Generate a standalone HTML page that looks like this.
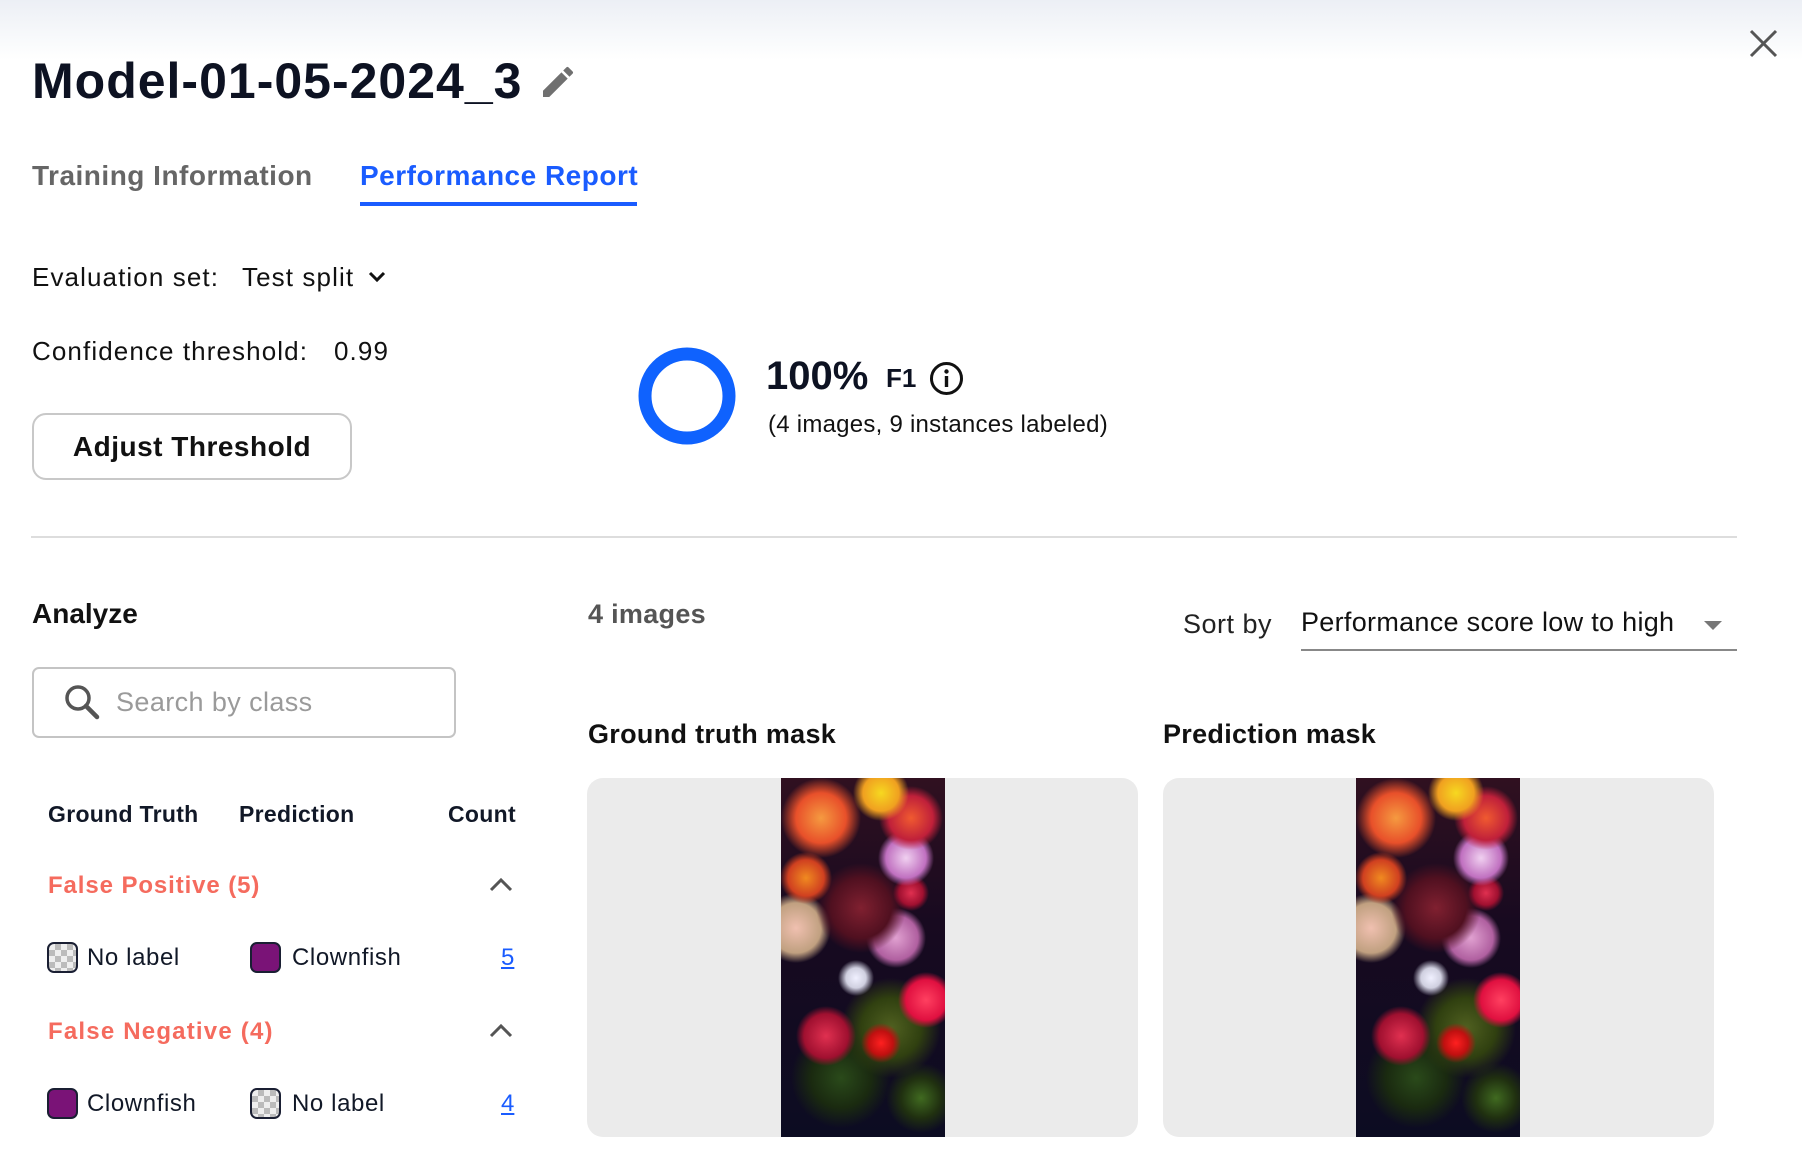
<!DOCTYPE html>
<html><head><meta charset="utf-8"><style>
*{margin:0;padding:0;box-sizing:border-box}
body{width:1802px;height:1157px;overflow:hidden;background:#fff;font-family:"Liberation Sans",sans-serif;color:#111827;position:relative}
.a{position:absolute;white-space:nowrap}
.top{position:absolute;left:0;top:0;width:1802px;height:60px;background:linear-gradient(#eceff5,#fff)}
.sw{position:absolute;width:31px;height:31px;border:2.5px solid #1a1f33;border-radius:7px}
.purple{background:#7a1377}
.chk{background-color:#eee;background-image:linear-gradient(45deg,#bbb 25%,transparent 25%,transparent 75%,#bbb 75%),linear-gradient(45deg,#bbb 25%,transparent 25%,transparent 75%,#bbb 75%);background-size:12px 12px;background-position:0 0,6px 6px}
.panel{position:absolute;top:778px;height:359px;width:551px;background:#ebebeb;border-radius:16px;overflow:hidden}
.strip{position:absolute;top:0;width:164px;height:359px;background:
radial-gradient(circle at 100px 15px,#f6d820 0,#f0a020 18px,transparent 28px),
radial-gradient(circle at 40px 40px,#f59a40 0,#e8502a 25px,transparent 40px),
radial-gradient(circle at 130px 40px,#f05a30 0,#c0203a 22px,transparent 32px),
radial-gradient(circle at 125px 80px,#f0d0f0 0,#c070c0 20px,transparent 28px),
radial-gradient(circle at 25px 100px,#f08a20 0,#d04020 18px,transparent 26px),
radial-gradient(circle at 130px 115px,#e03050 0,#a01030 12px,transparent 18px),
radial-gradient(circle at 80px 130px,#802030 0,#501020 30px,transparent 45px),
radial-gradient(circle at 15px 150px,#f0c0b0 0,#c0a080 25px,transparent 35px),
radial-gradient(circle at 115px 160px,#e0a0d0 0,#b060a0 22px,transparent 30px),
radial-gradient(circle at 75px 200px,#f0f0ff 0,#d0d0e0 10px,transparent 18px),
radial-gradient(circle at 145px 222px,#ff4060 0,#e01040 20px,transparent 28px),
radial-gradient(circle at 45px 258px,#e03050 0,#a01030 22px,transparent 30px),
radial-gradient(circle at 100px 265px,#ff2020 0,#c01010 12px,transparent 20px),
radial-gradient(circle at 110px 250px,#506020 0,#304010 30px,transparent 50px),
radial-gradient(circle at 60px 300px,#2a4a1a 0,#1a2a10 30px,transparent 50px),
radial-gradient(circle at 140px 320px,#406a20 0,#203010 20px,transparent 35px),
linear-gradient(#301020,#180a20 40%,#0c0c22)}
.t26{font-size:26px;line-height:32px;color:#111;letter-spacing:1.1px}
.t24{font-size:24px;line-height:30px;letter-spacing:0.6px}
</style></head><body>
<div class="top"></div>
<div class="a" style="left:32px;top:49px;font-size:50px;font-weight:bold;line-height:64px;letter-spacing:1px;color:#0d1222">Model-01-05-2024_3</div>
<svg class="a" style="left:538px;top:62px" width="40" height="40" viewBox="0 0 24 24"><path fill="#707070" d="M3 17.25V21h3.75L17.81 9.94l-3.75-3.75L3 17.25zM20.71 7.04a1 1 0 0 0 0-1.41l-2.34-2.34a1 1 0 0 0-1.41 0l-1.83 1.83 3.75 3.75 1.83-1.83z"/></svg>
<svg class="a" style="left:1748px;top:28px" width="31" height="31" viewBox="0 0 31 31"><path d="M3 3L28 28M28 3L3 28" stroke="#555" stroke-width="3"/></svg>
<div class="a" style="left:32px;top:159px;font-size:28px;line-height:34px;color:#666;font-weight:bold;letter-spacing:0.5px">Training Information</div>
<div class="a" style="left:360px;top:159px;font-size:28px;line-height:34px;color:#1a5cff;font-weight:bold;letter-spacing:0.5px">Performance Report</div>
<div class="a" style="left:360px;top:202px;width:277px;height:4px;background:#1a5cff"></div>
<div class="a t26" style="left:32px;top:261px">Evaluation set:</div>
<div class="a t26" style="left:242px;top:261px">Test split</div>
<svg class="a" style="left:367px;top:270px" width="20" height="14" viewBox="0 0 20 14"><path d="M3 3l7 7 7-7" stroke="#111" stroke-width="3" fill="none"/></svg>
<div class="a t26" style="left:32px;top:335px">Confidence threshold:</div>
<div class="a t26" style="left:334px;top:335px">0.99</div>
<div class="a" style="left:32px;top:413px;width:320px;height:67px;border:2px solid #c8c8c8;border-radius:14px;font-size:28px;font-weight:bold;line-height:63px;text-align:center;color:#111;letter-spacing:0.5px">Adjust Threshold</div>
<svg class="a" style="left:638px;top:347px" width="98" height="98"><circle cx="49" cy="49" r="42" fill="none" stroke="#0f62fe" stroke-width="13"/></svg>
<div class="a" style="left:766px;top:352px;font-size:40px;font-weight:bold;line-height:48px;color:#0d1222">100%</div>
<div class="a" style="left:886px;top:363px;font-size:26px;font-weight:bold;line-height:30px;color:#0d1222">F1</div>
<svg class="a" style="left:929px;top:361px" width="35" height="35" viewBox="0 0 35 35"><circle cx="17.5" cy="17.5" r="15" fill="none" stroke="#111" stroke-width="3"/><rect x="15.8" y="15" width="3.4" height="11" fill="#111"/><circle cx="17.5" cy="10.5" r="2.2" fill="#111"/></svg>
<div class="a" style="left:768px;top:410px;font-size:24px;line-height:30px;color:#111;letter-spacing:0.25px">(4 images, 9 instances labeled)</div>
<div class="a" style="left:31px;top:536px;width:1706px;height:2px;background:#ddd"></div>
<div class="a" style="left:32px;top:597px;font-size:28px;font-weight:bold;line-height:34px;color:#111">Analyze</div>
<div class="a" style="left:32px;top:667px;width:424px;height:71px;border:2px solid #c4c4c4;border-radius:7px"></div>
<svg class="a" style="left:62px;top:682px" width="40" height="40" viewBox="0 0 40 40"><circle cx="16" cy="16" r="11" fill="none" stroke="#555" stroke-width="3.5"/><path d="M24 24l11 11" stroke="#555" stroke-width="4.5" stroke-linecap="round"/></svg>
<div class="a" style="left:116px;top:686px;font-size:27px;line-height:32px;color:#9a9a9a;letter-spacing:0.4px">Search by class</div>
<div class="a" style="left:48px;top:800px;font-size:23px;font-weight:bold;line-height:28px;letter-spacing:0.3px">Ground Truth</div>
<div class="a" style="left:239px;top:800px;font-size:23px;font-weight:bold;line-height:28px;letter-spacing:0.3px">Prediction</div>
<div class="a" style="left:448px;top:800px;font-size:23px;font-weight:bold;line-height:28px;letter-spacing:0.3px">Count</div>
<div class="a t24" style="left:48px;top:871px;font-weight:bold;color:#f56b5e;letter-spacing:0.9px">False Positive (5)</div>
<svg class="a" style="left:488px;top:876px" width="26" height="18" viewBox="0 0 26 18"><path d="M3 14l10-10 10 10" stroke="#555" stroke-width="3" fill="none"/></svg>
<div class="sw chk" style="left:47px;top:942px"></div>
<div class="a t24" style="left:87px;top:943px">No label</div>
<div class="sw purple" style="left:250px;top:942px"></div>
<div class="a t24" style="left:292px;top:943px">Clownfish</div>
<div class="a" style="left:501px;top:943px;font-size:24px;line-height:30px;color:#1a5cff;text-decoration:underline">5</div>
<div class="a t24" style="left:48px;top:1017px;font-weight:bold;color:#f56b5e;letter-spacing:1.2px">False Negative (4)</div>
<svg class="a" style="left:488px;top:1022px" width="26" height="18" viewBox="0 0 26 18"><path d="M3 14l10-10 10 10" stroke="#555" stroke-width="3" fill="none"/></svg>
<div class="sw purple" style="left:47px;top:1088px"></div>
<div class="a t24" style="left:87px;top:1089px">Clownfish</div>
<div class="sw chk" style="left:250px;top:1088px"></div>
<div class="a t24" style="left:292px;top:1089px">No label</div>
<div class="a" style="left:501px;top:1089px;font-size:24px;line-height:30px;color:#1a5cff;text-decoration:underline">4</div>
<div class="a" style="left:588px;top:597px;font-size:27px;font-weight:bold;line-height:34px;color:#555;letter-spacing:0.3px">4 images</div>
<div class="a" style="left:1183px;top:608px;font-size:27px;line-height:32px;color:#222;letter-spacing:0.5px">Sort by</div>
<div class="a" style="left:1301px;top:606px;font-size:27px;line-height:32px;color:#111;letter-spacing:0.3px">Performance score low to high</div>
<svg class="a" style="left:1702px;top:619px" width="22" height="12"><path d="M2 2h18l-9 9z" fill="#777"/></svg>
<div class="a" style="left:1301px;top:649px;width:436px;height:2px;background:#888"></div>
<div class="a" style="left:588px;top:717px;font-size:27px;font-weight:bold;line-height:34px;color:#111;letter-spacing:0.3px">Ground truth mask</div>
<div class="a" style="left:1163px;top:717px;font-size:27px;font-weight:bold;line-height:34px;color:#111;letter-spacing:0.3px">Prediction mask</div>
<div class="panel" style="left:587px"><div class="strip" style="left:194px"></div></div>
<div class="panel" style="left:1163px"><div class="strip" style="left:193px"></div></div>
</body></html>
